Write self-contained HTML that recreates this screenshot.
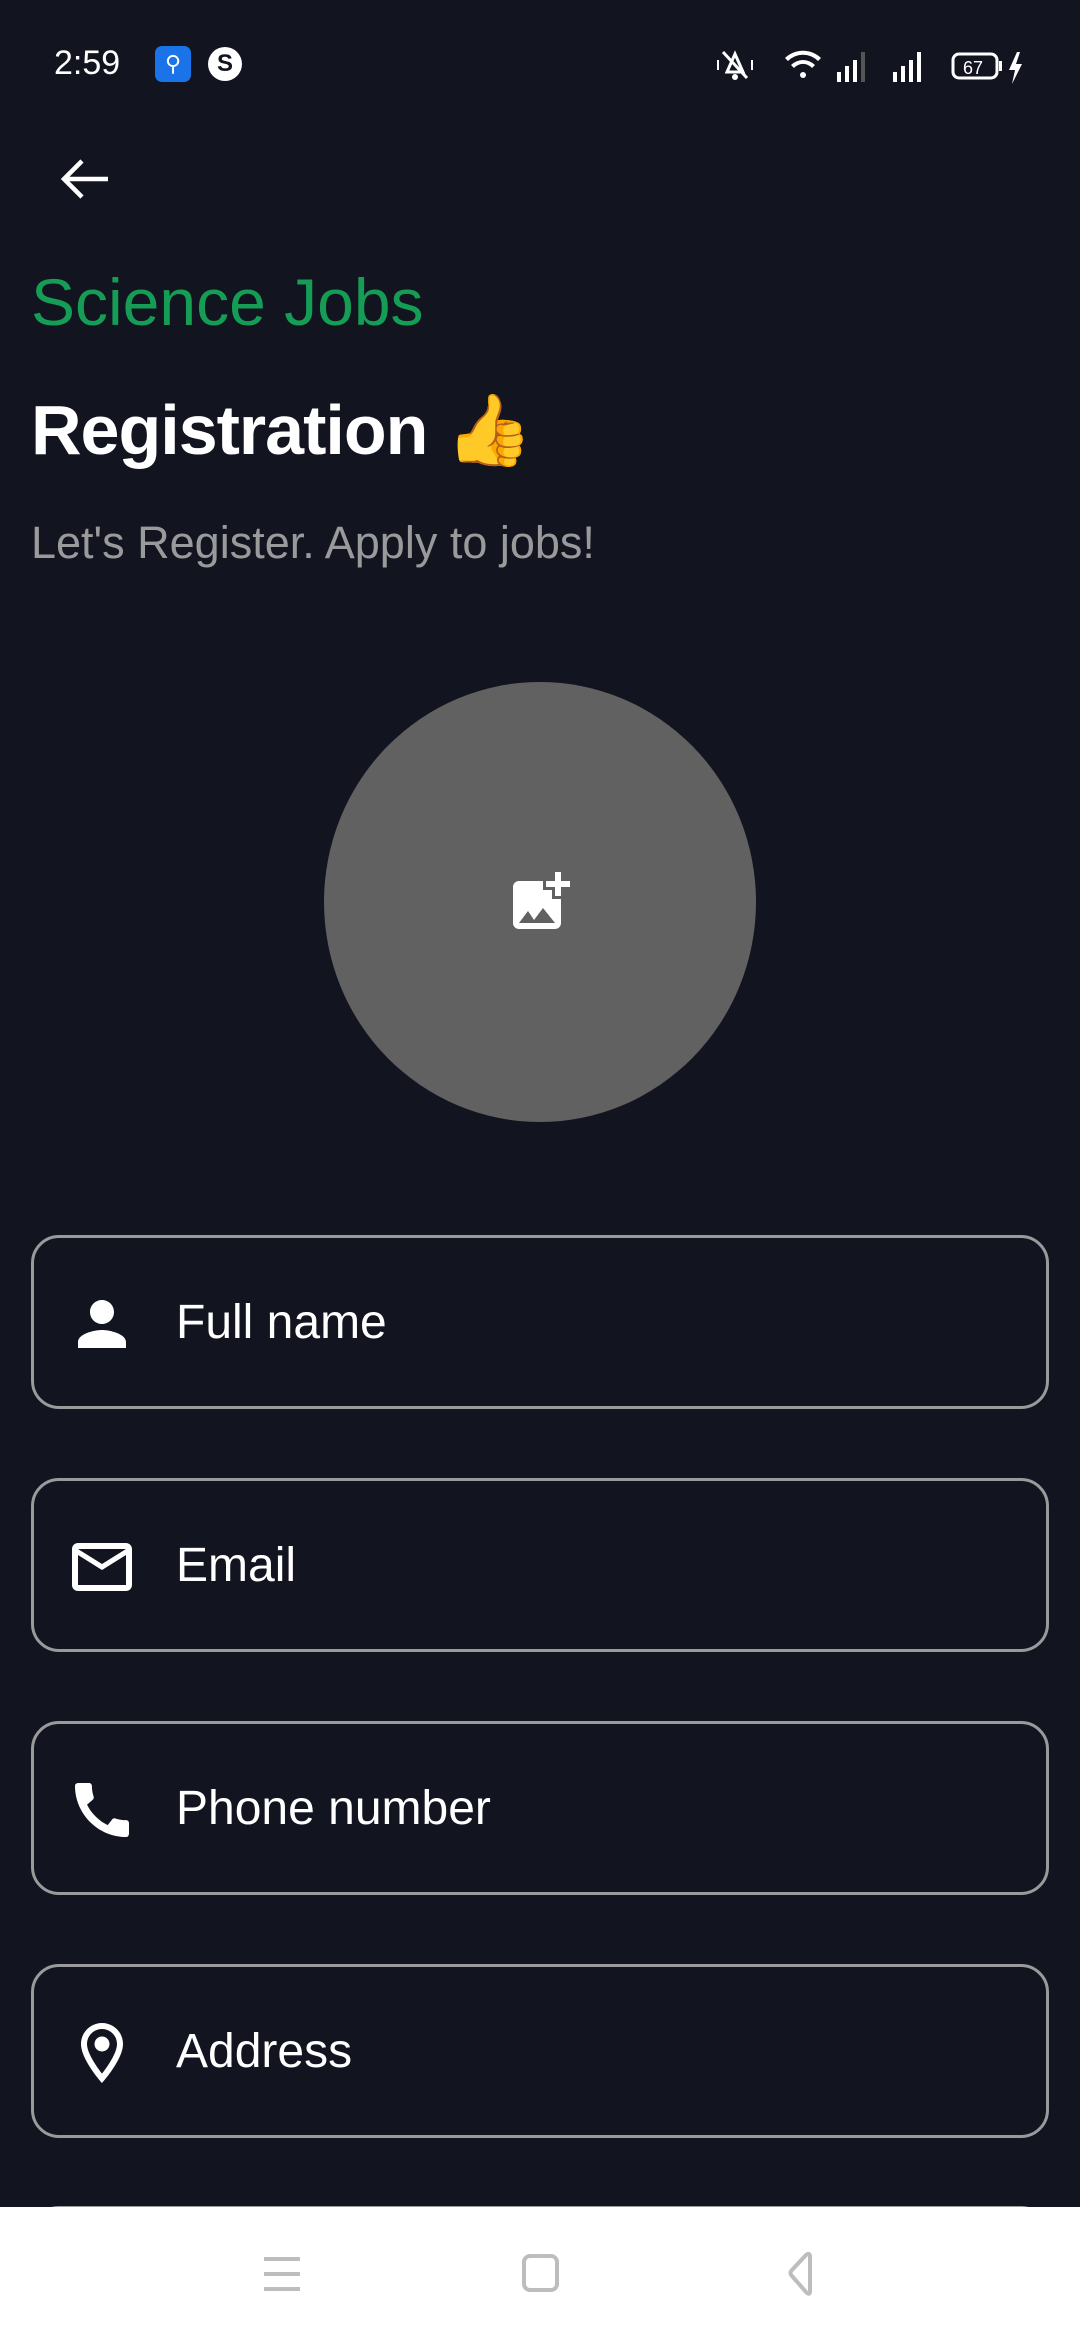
<!DOCTYPE html>
<html style="width:1080px;height:2340px;overflow:hidden"><head><meta charset="utf-8"><style>
*{margin:0;padding:0;box-sizing:border-box}
body{width:1080px;height:2340px;background:#121420;position:relative;overflow:hidden;font-family:"Liberation Sans",Roboto,sans-serif;color:#fff}
.abs{position:absolute}
.field{position:absolute;left:31px;width:1018px;height:174px;border:3px solid #9a9a9c;border-radius:28px}
.field svg{position:absolute;left:32px;top:50px;width:72px;height:72px}
.field span{position:absolute;left:142px;top:55px;font-size:48px;line-height:60px}
</style></head><body>
<div class="abs" style="left:54px;top:44px;font-size:34px;">2:59</div>
<div class="abs" style="left:155px;top:46px;width:36px;height:36px;background:#1a73e8;border-radius:7px;color:#fff;font-size:22px;text-align:center;line-height:36px">⚲</div>
<div class="abs" style="left:208px;top:47px;width:34px;height:34px;background:#fff;border-radius:50%;color:#121420;font-size:24px;font-weight:bold;text-align:center;line-height:34px">S</div>
<svg class="abs" style="left:715px;top:46px" width="320" height="40" viewBox="0 0 320 40">
 <g fill="#fff">
 <path d="M20 8l-8 18h16z" fill="none" stroke="#fff" stroke-width="3"/><circle cx="20" cy="31" r="3"/><line x1="8" y1="6" x2="32" y2="32" stroke="#fff" stroke-width="3"/>
 <rect x="2" y="14" width="2" height="10"/><rect x="36" y="14" width="2" height="10"/>
 <path d="M70 12a26 26 0 0 1 36 0l-3 3a21 21 0 0 0-30 0z"/><path d="M76 19a17 17 0 0 1 24 0l-3 3a12 12 0 0 0-18 0z"/><circle cx="88" cy="29" r="3"/>
 <rect x="122" y="26" width="4" height="10"/><rect x="130" y="20" width="4" height="16"/><rect x="138" y="14" width="4" height="22"/><rect x="146" y="6" width="4" height="30" fill="#555"/>
 <rect x="178" y="26" width="4" height="10"/><rect x="186" y="20" width="4" height="16"/><rect x="194" y="14" width="4" height="22"/><rect x="202" y="6" width="4" height="30"/>
 <rect x="238" y="8" width="44" height="24" rx="6" fill="none" stroke="#fff" stroke-width="3"/><rect x="284" y="15" width="3" height="10"/>
 <text x="248" y="28" font-size="18" font-family="Liberation Sans">67</text>
 <path d="M302 6l-8 18h6l-3 14 10-20h-6l4-12z"/>
 </g></svg>
<svg class="abs" style="left:56px;top:155px" width="56" height="48" viewBox="0 0 56 48"><path d="M52 24H8M26 6L8 24l18 18" fill="none" stroke="#fff" stroke-width="4.5"/></svg>
<div class="abs" style="left:31px;top:262px;font-size:66px;color:#169d55;line-height:80px">Science Jobs</div>
<div class="abs" style="left:31px;top:385px;font-size:70px;font-weight:bold;line-height:90px;letter-spacing:-1px">Registration <span style="font-size:70px">👍</span></div>
<div class="abs" style="left:31px;top:515px;font-size:45px;color:#9a9a9c;line-height:56px">Let's Register. Apply to jobs!</div>
<div class="abs" style="left:324px;top:682px;width:432px;height:440px;border-radius:50%;background:#616161"></div>
<svg class="abs" style="left:504px;top:866px" width="72" height="72" viewBox="0 0 24 24"><path fill="#fff" d="M19 7v2.99s-1.99.01-2 0V7h-3s.01-1.99 0-2h3V2h2v3h3v2h-3zm-3 4V8h-3V5H5c-1.1 0-2 .9-2 2v12c0 1.1.9 2 2 2h12c1.1 0 2-.9 2-2v-8h-3zM5 19l3-4 2 3 3-4 4 5H5z"/></svg>

<div class="field" style="top:1235px"><svg viewBox="0 0 24 24"><path fill="#fff" d="M12 12c2.21 0 4-1.790 4-4s-1.79-4-4-4-4 1.79-4 4 1.79 4 4 4zm0 2c-2.67 0-8 1.34-8 4v2h16v-2c0-2.66-5.33-4-8-4z"/></svg><span>Full name</span></div>
<div class="field" style="top:1478px"><svg viewBox="0 0 24 24"><path fill="#fff" d="M20 4H4c-1.1 0-2 .9-2 2v12c0 1.1.9 2 2 2h16c1.1 0 2-.9 2-2V6c0-1.1-.9-2-2-2zm0 14H4V8l8 5 8-5v10zm-8-7L4 6h16l-8 5z"/></svg><span>Email</span></div>
<div class="field" style="top:1721px"><svg viewBox="0 0 24 24"><path fill="#fff" d="M20.01 15.38c-1.23 0-2.42-.2-3.53-.56a.977.977 0 0 0-1.01.24l-1.57 1.97c-2.830-1.35-5.480-3.9-6.890-6.83l1.95-1.66c.27-.28.35-.67.24-1.02-.37-1.11-.56-2.3-.56-3.53 0-.54-.45-.99-.99-.99H4.19C3.65 3 3 3.24 3 3.99 3 13.28 10.73 21 20.01 21c.71 0 .99-.63.99-1.18v-3.45c0-.54-.45-.99-.99-.99z"/></svg><span>Phone number</span></div>
<div class="field" style="top:1964px"><svg viewBox="0 0 24 24"><path fill="#fff" d="M12 2C8.13 2 5 5.13 5 9c0 5.25 7 13 7 13s7-7.75 7-13c0-3.870-3.13-7-7-7zM7 9c0-2.76 2.24-5 5-5s5 2.24 5 5c0 2.88-2.88 7.19-5 9.88C9.92 16.21 7 11.85 7 9z"/><circle fill="#fff" cx="12" cy="9" r="2.5"/></svg><span>Address</span></div>
<div class="field" style="top:2206px;height:100px"></div>

<div class="abs" style="left:0;top:2207px;width:1080px;height:133px;background:#fff"></div>
<svg class="abs" style="left:0;top:2207px" width="1080" height="133" viewBox="0 0 1080 133">
 <g fill="none" stroke="#bdbdbd" stroke-width="4">
 <path d="M264 52h36M264 67h36M264 82h36"/>
 <rect x="524" y="49" width="33" height="34" rx="6"/>
 <path d="M810 50v34q0 5-4 1l-14-16q-3-3 0-6l14-15q4-3 4 2z"/>
 </g></svg>
</body></html>
